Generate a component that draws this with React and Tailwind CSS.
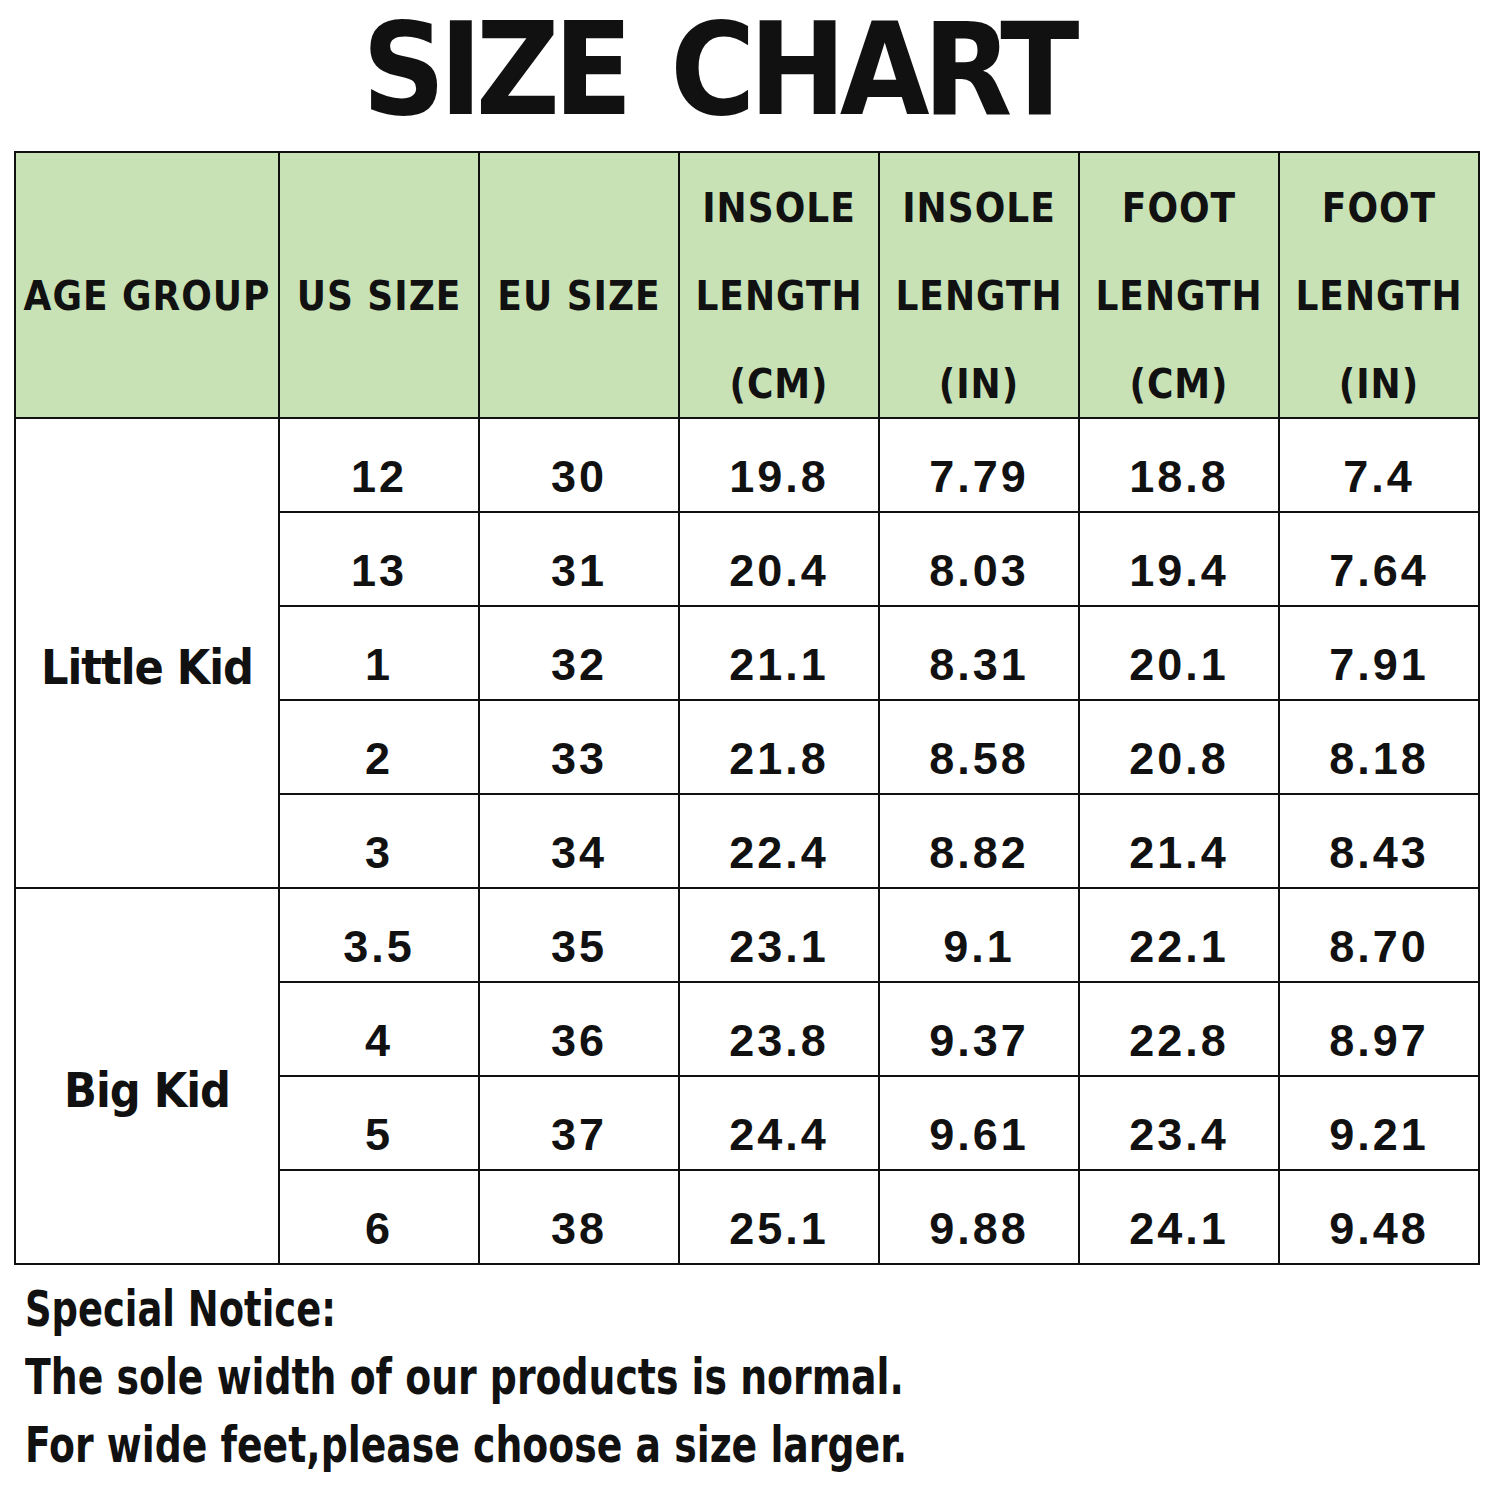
const rows = [
  ["12", "30", "19.8", "7.79", "18.8", "7.4"],
  ["13", "31", "20.4", "8.03", "19.4", "7.64"],
  ["1", "32", "21.1", "8.31", "20.1", "7.91"],
  ["2", "33", "21.8", "8.58", "20.8", "8.18"],
  ["3", "34", "22.4", "8.82", "21.4", "8.43"],
  ["3.5", "35", "23.1", "9.1", "22.1", "8.70"],
  ["4", "36", "23.8", "9.37", "22.8", "8.97"],
  ["5", "37", "24.4", "9.61", "23.4", "9.21"],
  ["6", "38", "25.1", "9.88", "24.1", "9.48"],
];

const headers = [
  ["AGE GROUP"],
  ["US SIZE"],
  ["EU SIZE"],
  ["INSOLE", "LENGTH", "(CM)"],
  ["INSOLE", "LENGTH", "(IN)"],
  ["FOOT", "LENGTH", "(CM)"],
  ["FOOT", "LENGTH", "(IN)"],
];

function GroupCell({ label, span }) {
  return (
    <div
      className={
        "bg-white flex items-center justify-center pt-[28px] text-[48px] font-bold tracking-[-1px] font-['DejaVu_Sans_Condensed','DejaVu_Sans',sans-serif] " +
        (span === 5 ? "row-span-5" : "row-span-4")
      }
    >
      {label}
    </div>
  );
}

export default function App() {
  return (
    <div className="w-[1500px] h-[1500px] bg-white text-[#111] overflow-hidden">
      <div className="pl-[362px] text-[129px] leading-[138px] font-bold tracking-[-0.05em] [word-spacing:10px] whitespace-nowrap font-['DejaVu_Sans_Condensed','DejaVu_Sans',sans-serif]">
        SIZE CHART
      </div>
      <div className="mt-[13px] ml-[14px] w-fit">
        <div className="grid grid-cols-[262px_198px_198px_198px_198px_198px_198px] grid-rows-[264px_repeat(9,92px)] gap-[2px] p-[2px] bg-[#111]">
          {headers.map((lines, i) => (
            <div
              key={i}
              className="bg-[#c8e2b6] flex flex-col items-center justify-center pt-[22px] text-[40px] font-bold leading-[88px] tracking-[1px] whitespace-nowrap font-['DejaVu_Sans_Condensed','DejaVu_Sans',sans-serif]"
            >
              {lines.map((l, j) => (
                <div key={j}>{l}</div>
              ))}
            </div>
          ))}
          {rows.map((r, ri) => (
            <>
              {ri === 0 && <GroupCell key="lk" label="Little Kid" span={5} />}
              {ri === 5 && <GroupCell key="bk" label="Big Kid" span={4} />}
              {r.map((v, ci) => (
                <div
                  key={ri + "-" + ci}
                  className="bg-white flex items-center justify-center pt-[24px] text-[45px] font-bold tracking-[3px] font-['Liberation_Sans',Arial,sans-serif]"
                >
                  {v}
                </div>
              ))}
            </>
          ))}
        </div>
      </div>
      <div className="pl-[25px] pt-[10px] text-[50px] leading-[68px] font-bold whitespace-nowrap font-['DejaVu_Sans_Condensed','DejaVu_Sans',sans-serif]">
        <div className="origin-left scale-x-[0.82]">Special Notice:</div>
        <div className="origin-left scale-x-[0.84]">The sole width of our products is normal.</div>
        <div className="origin-left scale-x-[0.84]">For wide feet,please choose a size larger.</div>
      </div>
    </div>
  );
}
